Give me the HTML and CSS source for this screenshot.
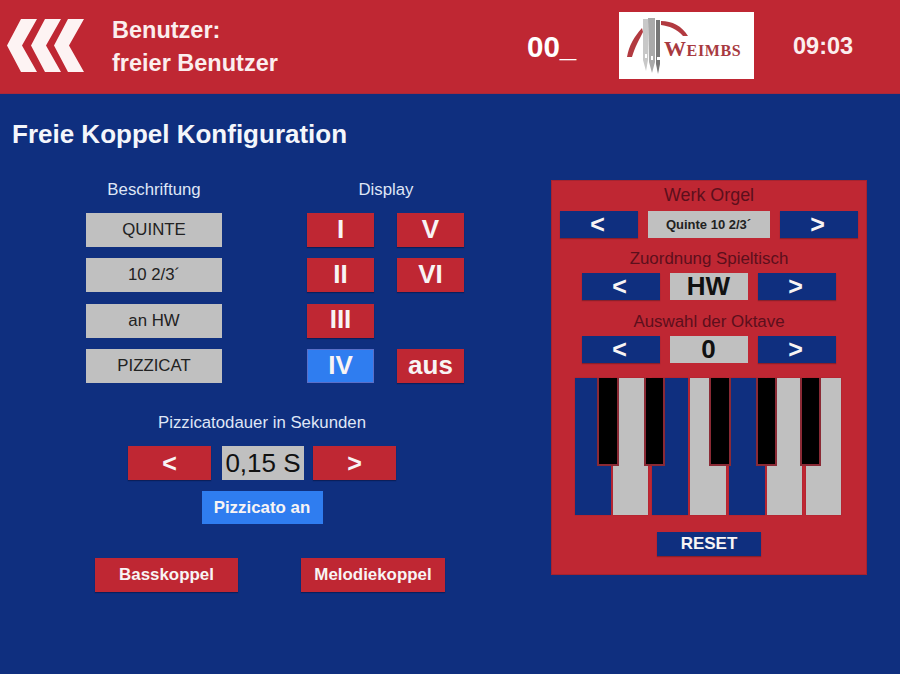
FILE: index.html
```html
<!DOCTYPE html>
<html lang="de">
<head>
<meta charset="utf-8">
<title>Freie Koppel Konfiguration</title>
<link rel="stylesheet" href="styles.css">
</head>
<body>
<header class="topbar">
  <svg class="back" viewBox="0 0 90 60" aria-label="Zurück">
    <polygon points="21,1 37,1 22,27.5 37,54 21,54 7,27.5" />
    <polygon points="45,1 61,1 46,27.5 61,54 45,54 31,27.5" />
    <polygon points="68,1 84,1 69,27.5 84,54 68,54 54,27.5" />
  </svg>
  <div class="user">Benutzer:<br>freier Benutzer</div>
  <div class="code">00_</div>
  <svg class="logo" viewBox="0 0 135 67" aria-label="Weimbs">
    <rect width="135" height="67" fill="#fff"/>
    <path class="arc" d="M8 45 C10 33 15 25 23 16 L24 20 C20 28 16 35 13 45 Z"/>
    <path class="arc" d="M42 9 C53 9 63 14 69 24 L64 24 C58 17 50 14 42 13 Z"/>
    <path class="p1" d="M24 7 H29 V48 L27 59 L24 48 Z"/>
    <path class="p2" d="M29 6 H36 V50 L33 61 L30 50 Z"/>
    <path class="p3" d="M37 8 H41 V52 L39 62 L37 52 Z"/>
    <path class="notch" d="M26 42 h2 v4 h-2 Z M32 44 h2 v4 h-2 Z M38 45 h3 v3 h-3 Z"/>
    <text class="wordmark" x="45" y="44"><tspan class="big">W</tspan>EIMBS</text>
  </svg>
  <div class="clock">09:03</div>
</header>
<main class="page">
  <h1 class="title">Freie Koppel Konfiguration</h1>
  <div class="content">
    <section class="left">
      <div class="labels-display">
        <div class="col-labels">
          <div class="heading">Beschriftung</div>
          <div class="field">QUINTE</div>
          <div class="field">10 2/3´</div>
          <div class="field">an HW</div>
          <div class="field">PIZZICAT</div>
        </div>
        <div class="col-display">
          <div class="heading">Display</div>
          <div class="display-grid">
            <div class="btn red num">I</div>
            <div class="btn red num">V</div>
            <div class="btn red num">II</div>
            <div class="btn red num">VI</div>
            <div class="btn red num">III</div>
            <div class="blank"></div>
            <div class="btn blue num active">IV</div>
            <div class="btn red aus">aus</div>
          </div>
        </div>
      </div>
      <div class="pizz">
        <div class="heading pizz-heading">Pizzicatodauer in Sekunden</div>
        <div class="pizz-row">
          <div class="btn red arrow wide">&lt;</div>
          <div class="value big-value">0,15 S</div>
          <div class="btn red arrow wide">&gt;</div>
        </div>
        <div class="btn blue pizz-on">Pizzicato an</div>
      </div>
      <div class="koppel">
        <div class="btn red koppel-btn">Basskoppel</div>
        <div class="btn red koppel-btn melodie">Melodiekoppel</div>
      </div>
    </section>
    <section class="panel">
      <div class="panel-label first">Werk Orgel</div>
      <div class="stepper top">
        <div class="btn navy arrow">&lt;</div>
        <div class="value small">Quinte 10 2/3´</div>
        <div class="btn navy arrow">&gt;</div>
      </div>
      <div class="panel-label">Zuordnung Spieltisch</div>
      <div class="stepper">
        <div class="btn navy arrow">&lt;</div>
        <div class="value bold">HW</div>
        <div class="btn navy arrow">&gt;</div>
      </div>
      <div class="panel-label third">Auswahl der Oktave</div>
      <div class="stepper">
        <div class="btn navy arrow">&lt;</div>
        <div class="value bold">0</div>
        <div class="btn navy arrow">&gt;</div>
      </div>
      <div class="keyboard">
        <div class="wkey on"></div>
        <div class="wkey"></div>
        <div class="wkey on"></div>
        <div class="wkey"></div>
        <div class="wkey on"></div>
        <div class="wkey"></div>
        <div class="wkey"></div>
        <div class="bkey k1"></div>
        <div class="bkey k2"></div>
        <div class="bkey k3"></div>
        <div class="bkey k4"></div>
        <div class="bkey k5"></div>
      </div>
      <div class="btn navy reset">RESET</div>
    </section>
  </div>
</main>
</body>
</html>
```
FILE: styles.css
```css
* { box-sizing: border-box; }
html, body { margin: 0; padding: 0; }
body {
  width: 900px;
  height: 674px;
  overflow: hidden;
  background: #0f2f7f;
  font-family: "Liberation Sans", Arial, sans-serif;
  color: #fff;
}
.topbar {
  height: 94px;
  background: #bf2733;
  display: flex;
  align-items: flex-start;
  border-bottom: 1px solid #a82a3a;
}
.back { width: 90px; height: 60px; margin-top: 18px; flex: none; }
.back polygon { fill: #fdf3f3; }
.user {
  margin: 14px 0 0 22px;
  width: 300px;
  font-size: 23.5px;
  font-weight: 700;
  line-height: 33.4px;
  color: #fbeeee;
  flex: none;
}
.code {
  margin: 29px 0 0 115px;
  width: 92px;
  font-size: 29.5px;
  line-height: 36px;
  font-weight: 700;
  flex: none;
}
.logo { width: 135px; height: 67px; margin-top: 12px; flex: none; }
.arc { fill: #b23a40; }
.p1 { fill: #c8c8c8; }
.p2 { fill: #aaaaaa; }
.p3 { fill: #787878; }
.notch { fill: #fff; }
.wordmark {
  font-family: "Liberation Serif", serif;
  font-weight: 700;
  font-size: 16px;
  fill: #a83a40;
  letter-spacing: 0.6px;
}
.big { font-size: 22px; }
.clock {
  margin: 31px 0 0 39px;
  font-size: 23.5px;
  line-height: 30px;
  font-weight: 700;
  color: #fbeeee;
}
.page { padding: 0; }
.title {
  margin: 0;
  padding: 25px 0 0 12px;
  height: 85px;
  font-size: 26px;
  line-height: 31px;
  font-weight: 700;
  color: #f4f6fb;
}
.content { display: flex; align-items: flex-start; }
.left { width: 551px; flex: none; }
.heading {
  font-size: 16.8px;
  line-height: 20px;
  color: #dfe6f6;
  text-align: center;
}
.labels-display { display: flex; padding-left: 86px; }
.col-labels { width: 136px; flex: none; display: flex; flex-direction: column; }
.col-labels .heading { margin-bottom: 13px; margin-top: 1px; }
.field {
  height: 34px;
  margin-bottom: 11.3px;
  background: #c0c0c0;
  color: #222;
  font-size: 16.8px;
  display: flex;
  align-items: center;
  justify-content: center;
}
.col-display { margin-left: 85px; width: 158px; flex: none; }
.col-display .heading { margin-top: 1px; margin-bottom: 13px; }
.display-grid {
  display: grid;
  grid-template-columns: 67px 67px;
  grid-auto-rows: 34px;
  column-gap: 23px;
  row-gap: 11.3px;
}
.btn {
  display: flex;
  align-items: center;
  justify-content: center;
  font-weight: 700;
  color: #f8f4f4;
}
.red { background: #bf2733; box-shadow: 0 1px 1px #0a1f5c; }
.blue { background: #2f7df0; }
.navy { background: #0f2f7f; box-shadow: 0 1px 1px #8a1f2a; }
.num { font-size: 26px; padding-bottom: 2px; }
.active { border: 1px solid #5a6fc8; padding-bottom: 0; }
.aus { font-size: 26px; }
.pizz { margin-top: 19px; display: flex; flex-direction: column; align-items: center; width: 524px; }
.pizz-row { display: flex; gap: 9px; margin-top: 13px; }
.arrow { width: 78px; height: 27px; font-size: 25px; padding-right: 2px; }
.wide { width: 83px; height: 34px; padding-right: 0; }
.value {
  background: #c0c0c0;
  color: #111;
  display: flex;
  align-items: center;
  justify-content: center;
}
.big-value { width: 82px; height: 34px; font-size: 26px; margin-left: 2px; }
.pizz-on { width: 121px; height: 33px; font-size: 16.9px; margin-top: 11px; }
.koppel { display: flex; padding-left: 95px; margin-top: 34px; }
.koppel-btn { width: 143px; height: 34px; font-size: 16.9px; }
.melodie { width: 144px; margin-left: 63px; }
.panel {
  width: 316px;
  height: 395px;
  background: #bf2733;
  border: 1px solid #a5232f;
  display: flex;
  flex-direction: column;
  align-items: center;
  margin-top: 1px;
}
.panel-label {
  font-size: 16.9px;
  line-height: 20px;
  color: #5c0f1c;
  margin-top: 11px;
}
.panel-label.first { margin-top: 4px; font-size: 17.9px; }
.panel-label.third { margin-top: 12px; }
.stepper { display: flex; gap: 10px; margin-top: 4px; height: 27px; margin-right: 1px; }
.stepper.top { margin-top: 6px; }
.stepper.top .value { width: 122px; }
.value.small { font-size: 13px; font-weight: 700; color: #222; }
.value.bold { width: 78px; font-size: 26px; font-weight: 700; }
.keyboard {
  position: relative;
  width: 266px;
  height: 137px;
  margin: 15px 2px 0 0;
  display: flex;
}
.wkey {
  width: 36px;
  background: #c0c0c0;
  box-shadow: 0 0 1px #8a1f2a;
}
.wkey:nth-child(2) { width: 35px; margin-left: 2px; }
.wkey:nth-child(3) { margin-left: 4px; }
.wkey:nth-child(4) { margin-left: 2px; }
.wkey:nth-child(5) { margin-left: 3px; }
.wkey:nth-child(6) { width: 35px; margin-left: 2px; }
.wkey:nth-child(7) { width: 35px; margin-left: 4px; }
.wkey.on { background: #0f2f7f; }
.bkey {
  position: absolute;
  top: 0;
  height: 88px;
  width: 21px;
  background: #000;
  border: 2px solid #8a2a35;
  border-top: none;
}
.k1 { left: 22px; width: 22px; }
.k2 { left: 69px; }
.k3 { left: 134px; width: 22px; }
.k4 { left: 181px; }
.k5 { left: 225px; }
.reset { width: 104px; height: 24px; font-size: 17px; margin-top: 17px; }
```
